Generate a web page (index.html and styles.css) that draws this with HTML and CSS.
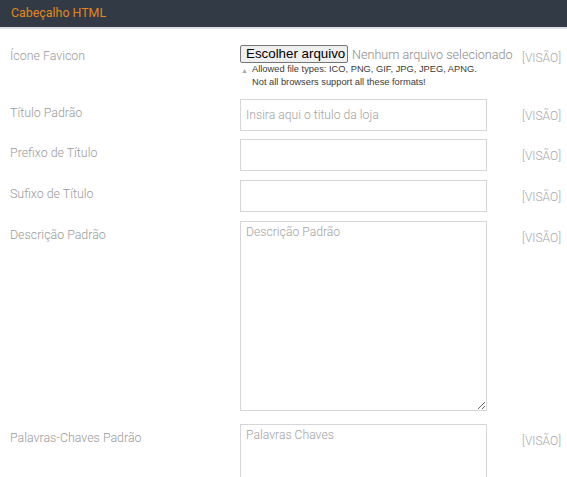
FILE: index.html
```html
<!DOCTYPE html>
<html lang="pt">
<head>
<meta charset="utf-8">
<link rel="stylesheet" href="styles.css">
</head>
<body>
<div class="panel-head">Cabeçalho HTML</div>
<div class="form">
  <div class="row row-file">
    <label class="lbl">Ícone Favicon</label>
    <div class="ctrl">
      <div class="file">
        <button class="file-btn" type="button">Escolher arquivo</button>
        <span class="file-name">Nenhum arquivo selecionado</span>
      </div>
      <div class="help"><span class="tri">▲</span>Allowed file types: ICO, PNG, GIF, JPG, JPEG, APNG.<br>Not all browsers support all these formats!</div>
    </div>
    <span class="vis vis-file">[VISÃO]</span>
  </div>
  <div class="row">
    <label class="lbl">Título Padrão</label>
    <div class="ctrl"><input class="inp" type="text" placeholder="Insira aqui o titulo da loja"></div>
    <span class="vis">[VISÃO]</span>
  </div>
  <div class="row">
    <label class="lbl">Prefixo de Título</label>
    <div class="ctrl"><input class="inp" type="text"></div>
    <span class="vis">[VISÃO]</span>
  </div>
  <div class="row">
    <label class="lbl">Sufixo de Título</label>
    <div class="ctrl"><input class="inp" type="text"></div>
    <span class="vis">[VISÃO]</span>
  </div>
  <div class="row">
    <label class="lbl">Descrição Padrão</label>
    <div class="ctrl"><textarea class="ta" placeholder="Descrição Padrão"></textarea></div>
    <span class="vis">[VISÃO]</span>
  </div>
  <div class="row">
    <label class="lbl">Palavras-Chaves Padrão</label>
    <div class="ctrl"><textarea class="ta" placeholder="Palavras Chaves"></textarea></div>
    <span class="vis">[VISÃO]</span>
  </div>
</div>
</body>
</html>
```
FILE: styles.css
```css
html, body {
  margin: 0;
  padding: 0;
  background: #fff;
  font-family: Roboto, "Liberation Sans", sans-serif;
  overflow: hidden;
}
.panel-head {
  height: 27px;
  line-height: 26px;
  background: #323a46;
  color: #e3871c;
  font-size: 12.4px;
  padding-left: 11px;
  border-bottom: 2px solid #dfe1e5;
}
.form {
  padding-top: 15px;
}
.row {
  display: grid;
  grid-template-columns: 230px 247px 45px;
  padding-left: 10px;
  margin-bottom: 8.7px;
}
.row-file { margin-bottom: 9.7px; }
.lbl {
  font-size: 12.4px;
  font-weight: 300;
  color: #999;
  padding-top: 5px;
  line-height: 18px;
}
.row-file .lbl { padding-top: 3px; }
.ctrl { display: flex; flex-direction: column; }
.vis {
  font-size: 12px;
  font-weight: 300;
  color: #a7a7a7;
  padding-left: 35px;
  padding-top: 9px;
  line-height: 16px;
  white-space: nowrap;
}
.vis-file { padding-top: 6px; }
.file {
  display: flex;
  align-items: center;
  white-space: nowrap;
  margin-top: 1px;
}
.file-btn {
  font-family: "Liberation Sans", Arial, sans-serif;
  font-size: 13.33px;
  height: 18px;
  padding: 0 5px;
  margin: 0;
  background: #efefef;
  border: 1px solid #767676;
  border-radius: 2px;
  color: #000;
  line-height: 16px;
  width: 108px;
}
.file-name {
  font-family: Roboto, "Liberation Sans", sans-serif;
  font-weight: 300;
  font-size: 12.6px;
  color: #8a8a8a;
  margin-left: 4px;
}
.help {
  font-family: "Liberation Sans", Arial, sans-serif;
  font-size: 9.3px;
  line-height: 13px;
  color: #3a3a3a;
  padding-left: 12px;
  margin-top: 0;
  white-space: nowrap;
  position: relative;
}
.tri {
  position: absolute;
  left: 1px;
  top: 1px;
  font-size: 7px;
  color: #aaa;
}
.inp {
  box-sizing: border-box;
  width: 247px;
  height: 32px;
  margin: 0;
  border: 1px solid #d5d5da;
  border-radius: 0;
  padding: 0 5px;
  font-family: Roboto, "Liberation Sans", sans-serif;
  font-weight: 300;
  font-size: 12.2px;
  color: #555;
  outline: none;
}
.inp::placeholder, .ta::placeholder { color: #a2a2a2; }
.ta {
  display: block;
  box-sizing: border-box;
  width: 247px;
  height: 190px;
  margin: 0 0 4.8px 0;
  border: 1px solid #d5d5da;
  border-radius: 0;
  padding: 3px 5px;
  font-family: Roboto, "Liberation Sans", sans-serif;
  font-weight: 300;
  font-size: 12.2px;
  color: #555;
  outline: none;
}
```
